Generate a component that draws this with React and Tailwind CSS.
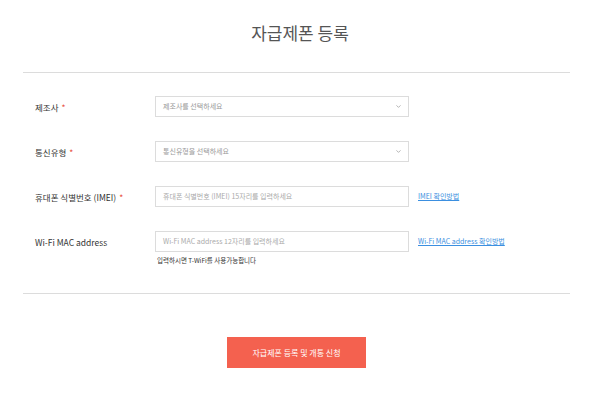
import { ChevronDown } from "lucide-react";

const font = {
  fontFamily: '"Noto Sans CJK KR", "Noto Sans", sans-serif',
};

function Label({ children, required }) {
  return (
    <div className="w-[120px] shrink-0 text-[8.5px] leading-[10px] text-[#333]">
      {children}
      {required && <span className="ml-[3px] text-[#e8513f]">*</span>}
    </div>
  );
}

function SelectBox({ placeholder }) {
  return (
    <div className="flex h-[21px] w-[254px] items-center justify-between border border-[#dcdcdc] bg-white pl-[7px] pr-[6px]">
      <span className="text-[7px] leading-[9px] text-[#999]">{placeholder}</span>
      <ChevronDown className="h-[7px] w-[7px] text-[#999]" strokeWidth={2.5} />
    </div>
  );
}

function InputBox({ placeholder }) {
  return (
    <div className="flex h-[21px] w-[254px] items-center border border-[#dcdcdc] bg-white pl-[7px]">
      <span className="text-[7px] leading-[9px] text-[#aaa]">{placeholder}</span>
    </div>
  );
}

export default function App() {
  return (
    <div className="h-[400px] w-[600px] bg-white" style={font}>
      {/* Title */}
      <h1 className="pt-[22px] text-center text-[17px] leading-[22px] font-normal text-[#555]">
        자급제폰 등록
      </h1>

      <div className="mx-[23px] mt-[28px] w-[547px] border-t border-[#dcdcdc]">
        <div className="flex flex-col gap-[24px] pl-[12px] pt-[23px] pb-[28px]">
          <div className="flex h-[21px] items-center">
            <Label required>제조사</Label>
            <SelectBox placeholder="제조사를 선택하세요" />
          </div>

          <div className="flex h-[21px] items-center">
            <Label required>통신유형</Label>
            <SelectBox placeholder="통신유형을 선택하세요" />
          </div>

          <div className="flex h-[21px] items-center">
            <Label required>휴대폰 식별번호 (IMEI)</Label>
            <InputBox placeholder="휴대폰 식별번호 (IMEI) 15자리를 입력하세요" />
            <a className="ml-[9px] text-[7px] leading-[9px] text-[#3b8fe0] underline">
              IMEI 확인방법
            </a>
          </div>

          <div className="flex flex-col">
            <div className="flex h-[21px] items-center">
              <Label>Wi-Fi MAC address</Label>
              <InputBox placeholder="Wi-Fi MAC address 12자리를 입력하세요" />
              <a className="ml-[9px] text-[7px] leading-[9px] text-[#3b8fe0] underline">
                Wi-Fi MAC address 확인방법
              </a>
            </div>
            <p className="ml-[122px] mt-[4px] text-[6.5px] leading-[9px] text-[#333]">
              입력하시면 T-WiFi를 사용가능합니다
            </p>
          </div>
        </div>

        <div className="border-t border-[#dcdcdc] pt-[43px]">
          <div className="flex justify-center">
            <button className="h-[31px] w-[139px] bg-[#f4614f] text-[8px] text-white">
              자급제폰 등록 및 개통 신청
            </button>
          </div>
        </div>
      </div>
    </div>
  );
}
